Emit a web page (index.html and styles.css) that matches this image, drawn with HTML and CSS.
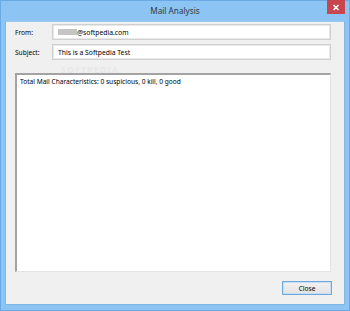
FILE: index.html
```html
<!DOCTYPE html>
<html>
<head>
<meta charset="utf-8">
<link rel="stylesheet" href="styles.css">
</head>
<body>
<div class="window">
  <div class="titlebar">
    <span class="title">Mail Analysis</span>
    <div class="close-x">
      <svg width="8" height="7" viewBox="0 0 8 7"><path d="M1.5 1 L6.5 6 M6.5 1 L1.5 6" stroke="#fff" stroke-width="1.6"/></svg>
    </div>
  </div>
  <div class="client">
    <div class="field">
      <span class="label">From:</span>
      <div class="input"><span class="blur"></span>@softpedia.com</div>
    </div>
    <div class="field">
      <span class="label">Subject:</span>
      <div class="input">This is a Softpedia Test</div>
    </div>
    <div class="watermark">SOFTPEDIA</div>
    <div class="output">Total Mail Characteristics: 0 suspicious, 0 kill, 0 good</div>
    <div class="buttons">
      <button class="btn">Close</button>
    </div>
  </div>
</div>
</body>
</html>
```

FILE: styles.css
```css
html, body {
  margin: 0;
  padding: 0;
}
body {
  width: 350px;
  height: 311px;
  overflow: hidden;
  font-family: "Noto Sans", "Open Sans", sans-serif;
  font-size: 6.6px;
  color: #000;
}
.window {
  width: 350px;
  height: 311px;
  box-sizing: border-box;
  background: #8cc4f3;
  border: 1px solid #6aa9e3;
  display: flex;
  flex-direction: column;
}
.titlebar {
  height: 20px;
  position: relative;
  display: flex;
  align-items: center;
  justify-content: center;
}
.title {
  font-size: 8.2px;
  color: #2b3a4a;
  margin-top: -2px;
}
.close-x {
  position: absolute;
  right: 4px;
  top: -1px;
  width: 18px;
  height: 14px;
  background: #c9464f;
  display: flex;
  align-items: center;
  justify-content: center;
}
.client {
  flex: 1;
  margin: 0 4px 5px 4px;
  background: #f0f0f0;
  border: 1px solid #7fb6e6;
  border-top-color: #9ccbf2;
  padding: 2px 13px 0 9px;
  display: flex;
  flex-direction: column;
  position: relative;
}
.field {
  display: flex;
  align-items: center;
  height: 16px;
  margin-bottom: 4px;
}
.label {
  width: 37px;
  flex: none;
}
.input {
  flex: 1;
  height: 16px;
  box-sizing: border-box;
  border: 1px solid #cfcfcf;
  box-shadow: inset 0 0 0 1px #e9e9e9;
  background: #fff;
  display: flex;
  align-items: center;
  padding-left: 5px;
  font-size: 6.8px;
  color: #000;
}
.blur {
  display: inline-block;
  width: 19px;
  height: 6px;
  background: #c4c4c4;
}
.watermark {
  position: absolute;
  left: 55px;
  top: 41px;
  font-size: 9px;
  font-weight: bold;
  letter-spacing: 1px;
  color: #e8e8e8;
}
.output {
  margin-top: 9px;
  height: 199px;
  box-sizing: border-box;
  background: #fff;
  border-top: 2px solid #a3a3a3;
  border-left: 2px solid #a3a3a3;
  border-right: 1px solid #e4e4e4;
  border-bottom: 1px solid #e4e4e4;
  padding: 2px 3px;
  line-height: 10px;
}
.buttons {
  display: flex;
  justify-content: flex-end;
  margin-top: 9px;
}
.btn {
  width: 50px;
  height: 14px;
  box-sizing: border-box;
  border: 1px solid #6fa8dc;
  box-shadow: inset 0 0 0 1px #c7dff4;
  background: linear-gradient(#f2f2f2, #e3e3e3);
  font-family: "Noto Sans", "Open Sans", sans-serif;
  font-size: 6.6px;
  color: #000;
  padding: 0;
  margin-right: -1px;
}
```
